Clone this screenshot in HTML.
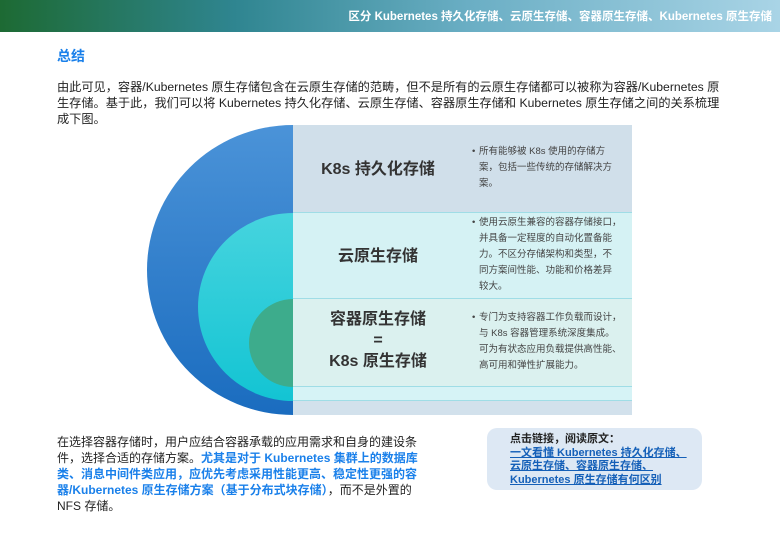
<!DOCTYPE html>
<html><head><meta charset="utf-8"><style>
*{margin:0;padding:0;box-sizing:border-box}
body{width:780px;height:540px;background:#fff;font-family:"Liberation Sans","Noto Sans CJK SC",sans-serif;position:relative;overflow:hidden;color:#222}
.hdr{position:absolute;left:0;top:0;width:780px;height:32px;background:linear-gradient(90deg,#1d6a33 0%,#2f8590 30%,#6aaec4 60%,#a9d4e6 100%)}
.hdr span{position:absolute;right:8px;top:8px;color:#fff;font-size:11.5px;font-weight:bold}
.t{position:absolute;left:57px;top:46px;font-size:14px;font-weight:bold;color:#1a80ea}
.p{position:absolute;left:57px;top:79px;width:672px;font-size:12.2px;line-height:16px}
.ab{position:absolute}
.lbl{position:absolute;left:293px;width:170px;text-align:center;font-weight:bold;color:#333;font-size:16px}
.d{position:absolute;left:479px;width:145px;font-size:9.5px;line-height:16px;color:#444}
.d b{position:absolute;left:-7px;font-weight:normal}
.bp{position:absolute;left:57px;top:434px;width:370px;font-size:12px;line-height:16px}
.bp em{font-style:normal;font-weight:bold;color:#1a80ea}
.box{position:absolute;left:487px;top:428px;width:215px;height:62px;background:#dde8f4;border-radius:10px;padding:5px 0 0 23px;font-size:11px;line-height:13.5px;font-weight:bold}
.box a{color:#1560b8;text-decoration:underline}
</style></head><body>
<div class="hdr"><span>区分 Kubernetes 持久化存储、云原生存储、容器原生存储、Kubernetes 原生存储</span></div>
<div class="t">总结</div>
<div class="p">由此可见，容器/Kubernetes 原生存储包含在云原生存储的范畴，但不是所有的云原生存储都可以被称为容器/Kubernetes 原生存储。基于此，我们可以将 Kubernetes 持久化存储、云原生存储、容器原生存储和 Kubernetes 原生存储之间的关系梳理成下图。</div>

<div class="ab" style="left:293px;top:125px;width:339px;height:87px;background:#d0dfea"></div>
<div class="ab" style="left:293px;top:212px;width:339px;height:86px;background:#d5f2f4;border-top:1px solid #9fdde6"></div>
<div class="ab" style="left:293px;top:298px;width:339px;height:88px;background:#dbf1ef;border-top:1px solid #9fdde6"></div>
<div class="ab" style="left:293px;top:386px;width:339px;height:14px;background:#d6f3f6;border-top:1px solid #9fdde6"></div>
<div class="ab" style="left:293px;top:400px;width:339px;height:15px;background:#d2e1ec;border-top:1px solid #9fdde6"></div>
<svg class="ab" style="left:140px;top:120px" width="160" height="300">
<defs>
<linearGradient id="g1" x1="0" y1="0" x2="0" y2="1"><stop offset="0" stop-color="#4b93d8"/><stop offset="1" stop-color="#1a6cbf"/></linearGradient>
<linearGradient id="g2" x1="0" y1="0" x2="0" y2="1"><stop offset="0" stop-color="#46d4de"/><stop offset="1" stop-color="#13c4d3"/></linearGradient>
</defs>
<path d="M153 5 A146 145 0 0 0 153 295 Z" fill="url(#g1)"/>
<path d="M153 93 A95 94 0 0 0 153 281 Z" fill="url(#g2)"/>
<path d="M153 179 A44 44 0 0 0 153 267 Z" fill="#3dac8c"/>
</svg>
<div class="lbl" style="top:155px">K8s 持久化存储</div>
<div class="lbl" style="top:242px">云原生存储</div>
<div class="lbl" style="top:309px;line-height:21px">容器原生存储<br>=<br>K8s 原生存储</div>
<div class="d" style="top:144px"><b>•</b>所有能够被 K8s 使用的存储方案，包括一些传统的存储解决方案。</div>
<div class="d" style="top:215px"><b>•</b>使用云原生兼容的容器存储接口，并具备一定程度的自动化置备能力。不区分存储架构和类型，不<br>同方案间性能、功能和价格差异<br>较大。</div>
<div class="d" style="top:310px"><b>•</b>专门为支持容器工作负载而设计，与 K8s 容器管理系统深度集成。可为有状态应用负载提供高性能、高可用和弹性扩展能力。</div>

<div class="bp">在选择容器存储时，用户应结合容器承载的应用需求和自身的建设条件，选择合适的存储方案。<em>尤其是对于 Kubernetes 集群上的数据库类、消息中间件类应用，应优先考虑采用性能更高、稳定性更强的容器/Kubernetes 原生存储方案（基于分布式块存储）</em>，而不是外置的 NFS 存储。</div>
<div class="box">点击链接，阅读原文：<br><a>一文看懂 Kubernetes 持久化存储、<br>云原生存储、容器原生存储、<br>Kubernetes 原生存储有何区别</a></div>
</body></html>
